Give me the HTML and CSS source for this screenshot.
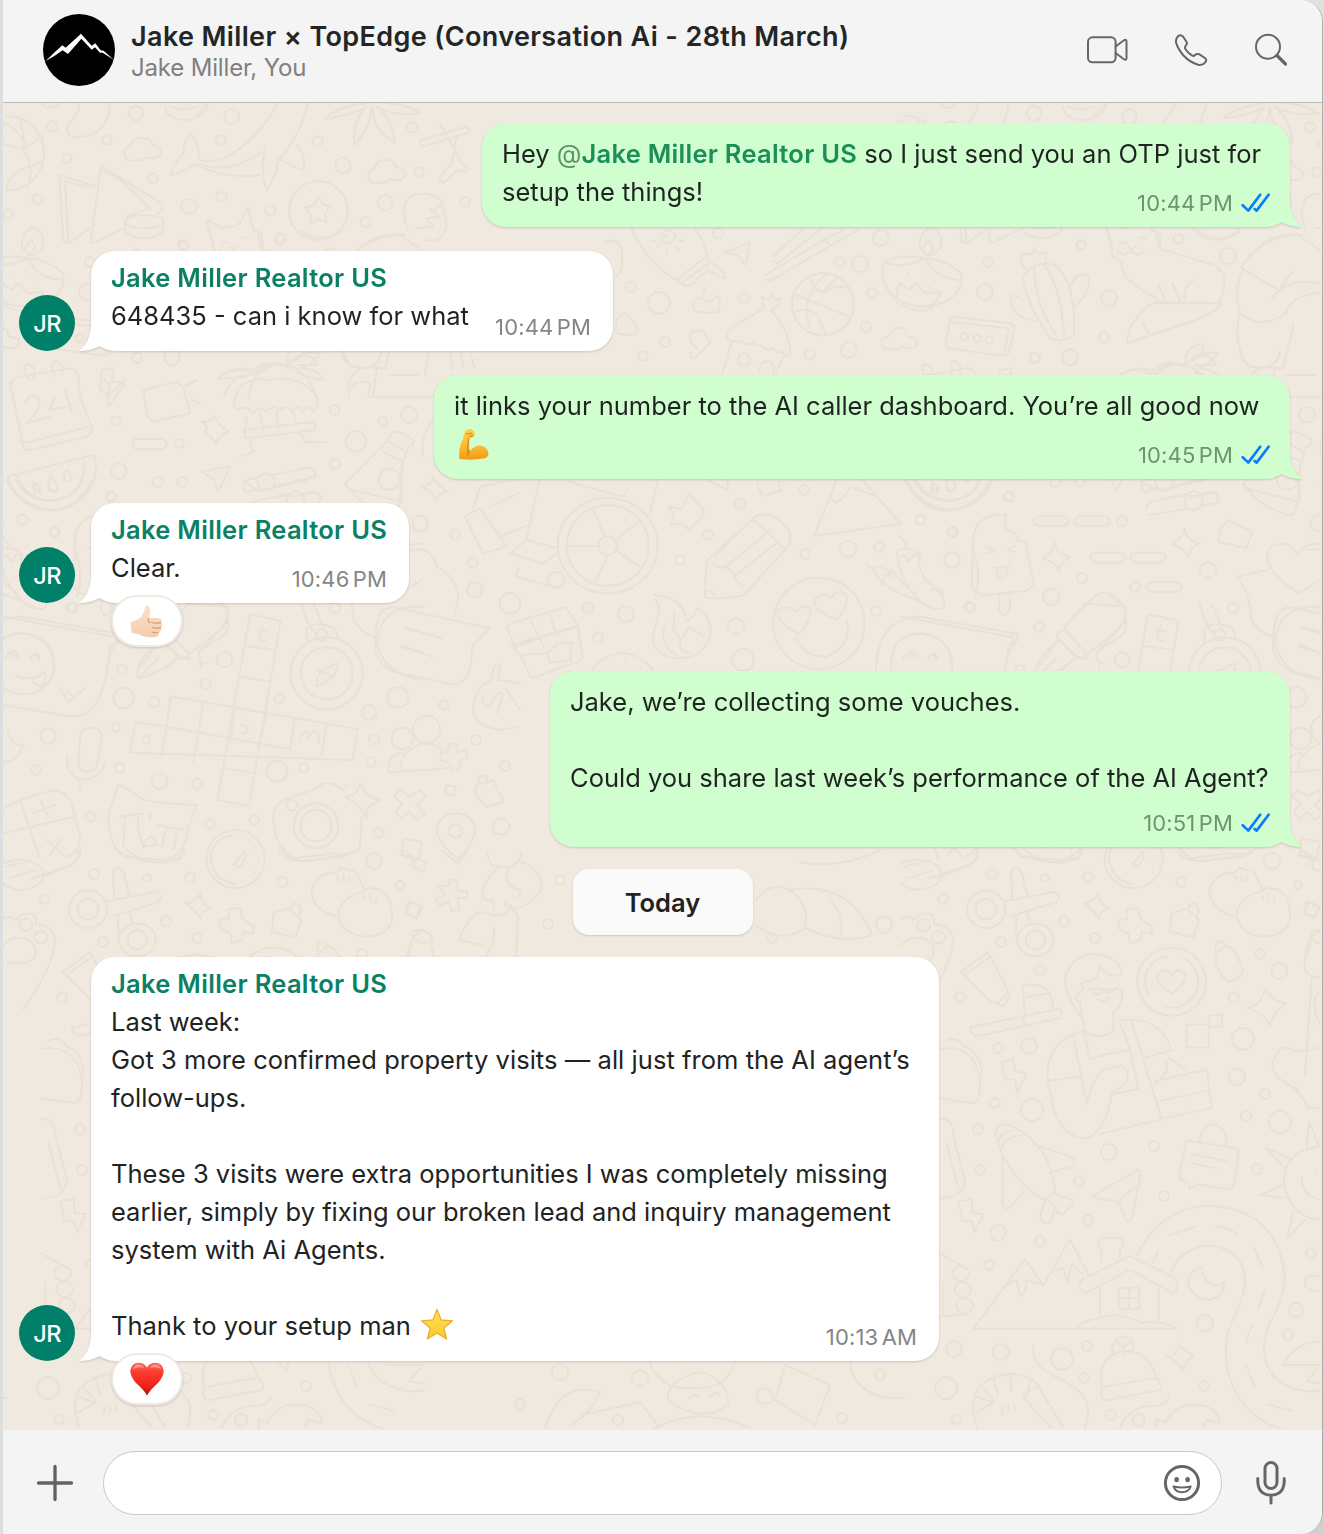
FILE: index.html
```html
<!DOCTYPE html>
<html lang="en">
<head>
<meta charset="utf-8">
<title>Jake Miller × TopEdge</title>
<link rel="stylesheet" href="styles.css">
</head>
<body>
<svg class="defs" width="0" height="0" aria-hidden="true">
  <defs>
    <linearGradient id="skin" x1="0" y1="0" x2="0" y2="1"><stop offset="0" stop-color="#ffd04a"/><stop offset=".6" stop-color="#fdb92e"/><stop offset="1" stop-color="#f09a18"/></linearGradient>
    <linearGradient id="pale" x1="0" y1="0" x2="0" y2="1"><stop offset="0" stop-color="#fbe2cc"/><stop offset="1" stop-color="#f3cdb0"/></linearGradient>
    <linearGradient id="red" x1="0" y1="0" x2="0" y2="1"><stop offset="0" stop-color="#ff6a5e"/><stop offset=".3" stop-color="#fb3b30"/><stop offset=".75" stop-color="#ee2018"/><stop offset="1" stop-color="#a80d0a"/></linearGradient>
    <linearGradient id="gold" x1="0" y1="0" x2="0" y2="1"><stop offset="0" stop-color="#ffe45c"/><stop offset="1" stop-color="#fdc62c"/></linearGradient>
    <symbol id="checks" viewBox="0 0 30 20"><path d="M1.7 12.2L7.3 17.6L19.2 1.8M13.6 16L15.6 17.6L27.6 1.8"/></symbol>
    <symbol id="tail" viewBox="0 0 24 26"><path d="M0 0H12Q13 17 24 25Q12 25 3.5 20L0 22Z"/></symbol>
  </defs>
</svg>
<div class="window">
  <header class="header">
    <svg class="group-photo" viewBox="129 42 216 216"><circle cx="237" cy="150" r="108" fill="#000"/><path d="M137 183L164 157L187 136L197 143L243 101L275 137L286 130L302 151L311 152L341 179L308 158L300 158L285 142L275 149L244 116L204 162L188 151L163 168Z" fill="#fff"/></svg>
    <div class="heading">
      <h1 class="title"><span>Jake Miller × TopEdge (Conversation Ai - 28th March)</span></h1>
      <p class="subtitle"><span>Jake Miller, You</span></p>
    </div>
    <nav class="actions">
      <svg class="icon" width="42" height="34" viewBox="0 0 42 34"><rect x="2" y="4.3" width="27.6" height="25" rx="4.5"/><path d="M29.6 13.5L38 7.2Q40.5 6 40.5 8.5V25Q40.5 27.500 38 26.300L29.600 20"/></svg>
      <svg class="icon" width="34" height="34" viewBox="0 0 34 34"><path d="M4 3.300Q6.500 1 9 3.500L12.600 9Q13.500 11 11.500 13.200Q10.500 14.600 11.500 16.200Q14.500 20.500 18.200 22.600Q19.800 23.400 21 22Q23 20.300 25 21.200L31 25Q33.200 27 31.300 29.300Q28.500 32.600 24.200 31.700Q16 29.500 9.500 22.500Q3.500 15.500 2 9.300Q1.600 5.600 4 3.300Z"/></svg>
      <svg class="icon" width="34" height="34" viewBox="0 0 34 34"><circle cx="14" cy="13.700" r="12"/><path class="heavy" d="M23 22.500L31.500 31"/></svg>
    </nav>
  </header>

  <main class="chat">
    <svg class="wallpaper" viewBox="3 103 1318 1327" aria-hidden="true">
      <g id="doodles">
        <g transform="translate(0 100) scale(.33333)">
          <path d="M20 48a112 112 0 1 1 0 224M0 60Q60 90 75 130L66 148L130 110M75 130L60 55M66 148Q110 200 80 262M66 148L8 130M20 270Q20 220 88 200L132 180"/>
          <path d="M238 8Q240 40 205 75Q190 112 240 112Q330 100 330 8M123 8Q150 40 178 8M495 20Q500 60 560 60Q620 50 625 8M510 20Q545 35 590 20M590 45L625 8"/>
          <path id="cloud" d="M380 180Q360 150 390 140Q400 110 430 115Q455 115 455 135Q490 140 480 165Q470 180 440 172Q420 185 400 182Z"/>
          <use href="#cloud" x="732" y="66"/>
          <path d="M570 98Q600 130 597 175Q600 190 660 178Q760 140 835 8M570 98Q550 130 550 160Q520 190 512 225Q550 220 585 193Q680 240 780 225M597 190Q680 225 780 160M795 140Q780 220 800 270Q825 240 835 180Q900 110 925 8M890 135Q920 170 910 212Q880 200 845 180"/>
          <path d="M270 385L205 430L190 425L178 225L285 258M205 430L195 243L270 262M303 198L485 310Q495 330 470 342M303 198L272 425Q278 433 300 420L370 385M303 210Q360 230 395 270L450 325L380 350M376 365V395Q430 435 490 395V365"/><ellipse cx="433" cy="365" rx="57" ry="20"/>
          <circle cx="955" cy="332" r="88"/><path d="M955 290L970 315L992 318L975 340L980 368L955 358L930 370L932 342L915 322L942 316Z"/>
          <path d="M1110 8Q1010 20 975 55Q1050 50 1100 20Q1060 60 1062 135Q1110 90 1115 20Q1120 90 1183 128Q1180 60 1130 20Q1180 50 1262 40Q1220 10 1140 8"/>
          <path d="M1262 120L1400 80Q1415 90 1400 100L1270 140Q1255 135 1262 120M1320 70L1385 190L1400 200V215L1370 212L1330 250L1318 235L1355 190L1370 105M1345 110L1365 150"/>
          <path d="M640 450L620 360L670 385L715 375L745 322L760 390L785 400L788 450M665 430q10-8 20 0M725 415q10-8 20 0M690 440l10 10l15-12"/>
          <path d="M1225 395Q1190 310 1240 285Q1290 270 1330 305Q1320 330 1290 330L1320 350L1280 355L1300 380L1250 385M1330 325L1340 375Q1330 430 1280 420M1080 445Q1130 395 1215 405"/>
          <circle cx="408" cy="40" r="22"/><circle cx="157" cy="79" r="16"/><circle cx="320" cy="121" r="14"/><circle cx="200" cy="175" r="14"/><circle cx="458" cy="235" r="15"/><circle cx="112" cy="297" r="15"/><circle cx="25" cy="343" r="14"/><circle cx="695" cy="50" r="22"/><circle cx="663" cy="121" r="15"/><circle cx="953" cy="123" r="15"/><circle cx="1029" cy="196" r="23"/><circle cx="567" cy="319" r="23"/><circle cx="665" cy="290" r="15"/><circle cx="811" cy="332" r="15"/><circle cx="1156" cy="308" r="23"/><circle cx="1096" cy="365" r="15"/><circle cx="842" cy="415" r="14"/><circle cx="1257" cy="215" r="14"/><circle cx="1236" cy="82" r="15"/><circle cx="1395" cy="305" r="14"/><circle cx="551" cy="436" r="13"/><circle cx="411" cy="773" r="14"/><circle cx="516" cy="773" r="23"/>
          <path d="M30 865Q30 835 60 830L210 805Q240 810 235 850L245 900M88 840Q60 800 85 793Q110 800 100 835M165 830Q145 785 170 783Q195 790 185 825M305 810L340 805L335 845L375 850L325 920L322 880L300 870ZM655 835Q700 790 780 815Q720 840 655 835M770 820Q800 780 860 795Q900 750 960 760Q930 800 900 805Q960 810 970 840Q920 835 890 815M745 900Q750 820 820 795Q910 780 950 890"/>
          <path d="M1025 755Q1030 800 1090 805Q1140 800 1145 755M1130 800L1120 890M1285 755L1275 830M1350 760l10 50M1380 755l12 55M1410 755l14 50M1040 870Q1050 820 1080 810"/>
        </g>
        <g transform="translate(600 220) scale(.46168 .33333)">
          <path d="M68 25Q100 130 180 195Q205 200 208 180L235 150Q235 80 205 25M165 180L230 110M175 190L240 125L270 160V178L240 155M133 40Q150 20 165 45Q160 75 140 70Q125 55 145 45M125 80l4-8M145 100v-15M170 90l-6-10M110 65l10-3M168 60l12 4"/>
          <path d="M268 98L325 68L315 135L298 105ZM375 110L440 25M375 125L385 130L480 25M358 165L490 55L530 28M358 178L370 182L560 28M485 60l15 18"/>
          <path d="M228 205Q210 235 235 245Q250 240 255 225Q265 255 255 275Q230 285 205 272Q195 240 215 235"/>
          <path d="M275 355Q275 325 300 310L355 265L350 230L365 240L372 222L378 240L390 235L388 255L370 270Q415 340 412 405Q400 415 395 395Q385 405 375 385Q360 395 350 375Q340 380 330 368Q315 380 305 362Q290 370 275 355M285 365L265 460M397 410L382 460M345 455Q345 420 365 425Q380 430 375 460"/><ellipse cx="312" cy="418" rx="13" ry="19"/>
          <ellipse cx="483" cy="253" rx="67" ry="93"/><path d="M425 225L540 290M455 180Q470 220 490 215Q510 190 540 205M490 162Q430 230 455 325M425 275Q450 260 470 285Q480 320 490 340M515 175Q480 210 490 215"/>
          <path d="M713 22Q685 50 695 85Q705 110 720 105Q745 85 738 50Q730 25 713 22M713 60Q690 90 708 103Q730 90 713 60M615 125Q600 210 660 250Q700 270 750 245Q790 210 782 160Q750 120 710 115Q650 100 615 125Q650 150 705 115Q730 180 782 180M645 250Q640 210 650 190L670 210L685 190L705 220L738 215Q730 250 715 255M655 255Q690 285 722 262M668 160v4M700 155v4M725 180v4"/>
          <path d="M760 295Q770 285 780 292L890 310Q900 320 895 340L885 400Q875 410 860 405L755 385Q745 375 750 355ZM755 305L885 325Q880 360 875 400"/><ellipse cx="789" cy="350" rx="8" ry="11"/><ellipse cx="817" cy="355" rx="8" ry="11"/><ellipse cx="843" cy="360" rx="8" ry="11"/>
          <path d="M615 385Q600 355 625 350Q640 310 660 330L665 350Q695 355 685 380Q670 390 660 380Q640 395 615 385M210 385Q185 360 200 335Q225 320 230 350L240 365L205 415Q190 415 200 395"/>
          <path d="M975 355Q920 240 915 170Q940 120 985 135Q1030 180 1027 345Q1005 370 975 355M940 140Q940 250 990 350M962 135Q1000 200 1005 350M920 145Q905 120 915 100L935 105L940 85L950 102L968 98L965 130M915 240Q890 215 890 240Q890 290 945 305M1018 200Q1030 155 1055 165Q1070 200 1030 260"/>
          <path d="M1098 25Q1110 70 1110 110L1130 125Q1125 180 1200 230L1210 245L1340 250Q1370 170 1330 135L1210 85L1205 40M1120 90L1135 105L1150 95L1165 105L1180 95M1210 195L1225 245M1240 190L1258 248M1285 182Q1260 200 1268 240M1142 370Q1140 310 1195 250L1345 250Q1340 275 1290 300L1142 370M1175 310Q1190 350 1200 340M1295 30Q1340 75 1385 35"/>
          <path d="M1390 140Q1430 50 1510 45L1560 90M1390 145L1470 210L1500 155M1390 155Q1370 230 1390 285Q1440 330 1485 280Q1500 220 1560 220M1385 280Q1370 370 1405 440L1480 445L1502 315M1455 235Q1490 170 1560 190M1270 445Q1260 380 1305 372Q1310 400 1285 420Q1320 390 1335 435L1290 435M1130 460Q1160 440 1190 460Q1220 410 1265 440M1490 465h60M10 65Q50 50 48 110Q50 150 35 170M35 340Q30 290 55 280L75 310Q95 340 60 345Z"/>
        </g>
        <g transform="translate(500 470) scale(.52549 .33333)">
          <ellipse cx="205" cy="227" rx="95" ry="143"/><ellipse cx="205" cy="227" rx="78" ry="121"/><ellipse cx="205" cy="227" rx="18" ry="28"/><path d="M200 199L175 115M220 210L263 155M222 242L265 290M204 256L182 335M187 229H130M285 135L300 30M75 30L50 210L110 235M50 210L20 250L80 280L110 250M0 200L55 165M35 295L30 320L105 350M130 35L235 80L242 60"/><ellipse cx="107" cy="330" rx="16" ry="24"/>
          <path d="M360 72L385 115Q395 140 358 178L345 160L325 165L330 140L322 110L345 118ZM390 383Q390 310 395 270L490 135Q510 125 535 155Q560 190 550 225L465 375Q430 390 390 383M405 280Q420 300 430 290L445 310Q450 340 462 350M410 260L480 145L545 240M430 290L515 180M445 320L530 215M390 360Q405 360 410 383"/>
          <path d="M598 197L640 30M598 197L763 162L690 30M632 60Q625 90 640 97Q660 80 665 50L715 78M490 35Q495 80 505 78L535 60L530 35M395 30L433 62V30"/>
          <path d="M770 30Q800 120 850 122Q910 115 932 30M787 30Q810 92 850 92Q900 90 915 30M822 35Q815 60 835 60M850 35Q845 70 865 62"/>
          <path d="M965 135Q900 125 900 220L898 350Q905 375 930 375L1000 362Q1020 350 1013 320L1000 215L985 212L980 190L965 180Q955 150 965 135M950 370V420Q960 450 970 420V365M925 232L942 242L928 250M980 228L965 238L980 245M938 290Q955 300 970 285M945 295Q945 325 956 325Q967 320 965 292"/>
          <rect x="1015" y="139" width="67" height="30" rx="15"/><rect x="1093" y="139" width="67" height="30" rx="15"/><rect x="1123" y="248" width="67" height="30" rx="15"/><rect x="1200" y="248" width="67" height="30" rx="15"/><rect x="1231" y="336" width="67" height="30" rx="15"/>
          <path id="spark" d="M1056 218Q1060 255 1085 262Q1065 275 1064 302Q1055 275 1032 265Q1052 250 1056 218"/><use href="#spark" x="246" y="-42"/>
          <path d="M1230 115Q1225 90 1300 78M1235 135L1305 118M1335 75L1360 65Q1375 80 1360 100L1335 105M1385 150L1432 185L1420 235L1368 215L1372 175ZM1415 40Q1440 110 1505 137Q1520 120 1520 35M1220 35L1250 62L1340 32"/><ellipse cx="1320" cy="92" rx="17" ry="28"/>
          <path d="M1520 370Q1460 310 1460 260Q1460 220 1490 222Q1510 225 1518 255Q1530 215 1560 222M1520 370L1560 330M1460 300L1402 320Q1430 380 1430 450Q1445 490 1470 500M1565 410Q1480 400 1475 520Q1490 620 1565 630M1530 475L1565 492M1520 530L1565 550"/>
          <path d="M758 198Q780 220 770 235Q800 240 800 260Q790 280 810 330Q850 380 845 410Q830 430 800 395Q720 350 712 300Q700 290 697 280M757 265Q750 240 770 235M757 262L770 255L778 275L790 250L800 262M757 265Q765 340 800 395M712 290Q740 290 745 320L735 310L725 345M745 300Q770 350 790 370M820 360Q850 350 840 385"/>
          <path d="M15 480Q10 465 30 455L125 412L148 465L30 530ZM55 440L85 535M92 425L110 500M20 525L148 470L157 560Q155 575 130 585L60 625L40 560M25 525Q35 570 60 550Q90 560 110 520L140 520M90 550L95 578L135 570V520"/>
          <path d="M293 385Q310 410 295 470Q280 540 320 560Q380 580 400 500Q405 440 375 415Q370 440 355 455Q350 380 293 375M315 460Q300 520 335 555M332 425L330 480L345 510Q335 540 360 550M345 510L360 470L388 500"/>
          <ellipse cx="607" cy="460" rx="87" ry="137"/><path d="M568 492Q520 450 530 420Q545 400 563 425Q575 400 590 415Q595 450 568 492M640 448Q590 420 600 385Q615 365 630 385Q640 355 658 370Q665 410 640 448M563 500Q575 560 620 560Q670 530 660 455"/>
          <path d="M715 600Q720 440 800 440L985 492Q990 505 970 540L965 560L960 600M745 600Q740 490 800 490Q860 500 860 600M777 560Q785 525 793 560M815 570Q823 535 831 570M175 600Q230 500 292 600M240 570v5M268 590v4"/>
          <path d="M1075 475Q1080 450 1140 370Q1170 360 1185 410Q1200 480 1180 500L1135 545L1140 590M1160 375L1185 410M1190 455L1140 540M1075 480L1115 550Q1110 575 1095 560L1060 500Q1060 480 1075 480M1060 515L1020 600M1095 560L1070 600"/>
        </g>
        <g transform="translate(0 380) scale(.33333)">
          <path d="M30 10L70 200Q75 215 100 208L260 170Q280 160 275 140L240 50M60 180Q70 190 90 185L270 140M75 70Q90 35 115 55Q130 80 80 130L150 110M165 50L150 90L220 75M195 30L215 95M430 30L530 5L550 20L570 100L460 125Q445 120 440 90ZM550 20L590 0M575 60L600 70M310 0L330 10L320 50L375 0"/>
          <path d="M605 125Q630 130 645 108Q655 140 688 155Q655 165 648 192Q635 165 612 158Q632 145 605 125M400 180Q400 175 410 177H485Q500 180 500 190Q500 208 485 208H410Q395 205 400 180M672 50Q700 -20 740 -10M710 90Q690 70 720 20Q760 -10 800 0Q900 -20 950 50Q960 80 940 95Q925 70 910 95Q895 70 875 95Q860 70 840 90Q820 70 800 95Q780 75 760 100Q740 75 710 90M740 110L735 160M730 150L945 125V150L735 175ZM750 180L760 215L720 230M900 155L915 185H980M780 100L790 150M830 95L835 145M880 95L890 135"/>
          <path d="M22 290L280 225Q290 240 285 290Q270 360 180 390Q60 390 22 290M50 290Q80 360 160 362Q250 350 255 245M105 310Q95 345 115 340Q130 325 105 310M150 290Q140 330 165 335Q185 315 150 290M200 270Q180 300 205 305Q225 295 200 270M605 275L690 258L655 335L640 295Z"/>
          <path d="M740 300L775 292M820 285L930 262Q950 270 945 290L825 318M775 325L740 338Q720 320 740 300M835 350Q860 335 880 350L940 335Q965 340 958 365"/><circle cx="798" cy="306" r="26"/>
          <path d="M1035 310L1155 190L1175 160Q1190 145 1240 180Q1245 195 1225 200L1205 260V365L1060 330Q1035 325 1035 310M1165 185L1215 215M1150 215Q1190 240 1205 240"/><circle cx="1168" cy="298" r="32"/>
          <path d="M1265 320Q1295 320 1300 290Q1315 325 1345 335Q1315 340 1310 360Q1295 330 1265 320M1395 410L1440 385L1520 500L1450 520ZM1420 385L1440 320L1540 300M1470 380L1555 340M1045 50Q1050 -10 1110 10L1105 50H1300M1270 230Q1260 160 1300 120"/>
          <path d="M1150 690Q1165 680 1180 682L1470 745L1415 800Q1420 900 1365 915L1180 875Q1125 850 1125 790Q1130 700 1150 690M1210 740L1325 775M1205 795L1295 830M1230 510Q1300 500 1310 560Q1370 590 1375 650L1365 700M230 650Q250 600 230 520"/>
          <path d="M10 710L340 770Q360 780 330 800Q320 960 260 1000Q230 1015 190 1005L10 975M180 925L205 965L255 925M200 930L215 945M10 775Q60 750 110 770Q165 800 163 860Q150 940 70 943Q30 940 10 925M15 835Q35 800 50 835M90 840Q105 805 118 835M45 885Q100 910 135 875Q145 910 120 920L100 905"/>
          <path d="M750 703L842 722L748 1277L652 1260ZM735 797L825 810M720 890L810 905M510 948L1073 1047L1058 1140L390 1118L407 1025L500 1040ZM705 990L690 1090M515 948L485 1130M610 965L580 1145M800 1000L775 1100M885 1015L870 1110M980 1030L965 1125M675 1165L765 1180M500 1040L870 1108"/>
          <path d="M770 750L800 755M788 735L778 775Q785 790 797 780M428 1080Q435 1060 450 1070Q450 1095 430 1090M900 1085Q905 1050 925 1055L925 1080Q940 1040 955 1060V1090M735 1015v4M725 1035L745 1040Q745 1065 725 1060"/>
          <circle cx="980" cy="880" r="108"/><circle cx="980" cy="880" r="78"/><path d="M950 918Q945 870 1013 850Q1010 900 950 918M955 870L1000 890M920 790V745Q950 720 1005 745L1015 780M905 670Q920 740 950 760M940 670L970 740"/><circle cx="965" cy="765" r="17"/>
          <path d="M415 895Q400 850 480 780L540 830Q480 880 415 895M420 890L475 835M540 830L570 840L560 810M560 670L685 680Q690 710 660 750L570 820M600 830Q590 850 620 850"/>
          <path d="M260 1045Q300 1035 305 1070L290 1160Q260 1190 235 1160L240 1075Q240 1050 260 1045M200 1130Q200 1190 250 1200Q310 1190 315 1145M240 1200V1225M10 1145Q50 1150 70 1095Q30 1100 25 1050"/>
          <path d="M1420 1000Q1420 920 1475 900Q1480 840 1500 855L1495 900L1560 910M1450 950Q1440 980 1470 980Q1490 930 1510 940L1490 1000M1420 1000Q1430 1040 1500 1050L1555 1040M1520 930L1560 990"/>
          <circle cx="1207" cy="1075" r="32"/><circle cx="1280" cy="1048" r="41"/><path d="M1165 1170Q1165 1120 1210 1120M1200 1175Q1200 1110 1270 1090Q1310 1090 1325 1110M1165 1178L1340 1165M1345 1090L1370 1092L1372 1115L1400 1110L1402 1135L1378 1142L1380 1168L1355 1170L1345 1148L1322 1140V1118L1345 1115Z"/>
          <path d="M355 1215Q370 1215 430 1260L500 1270L590 1275L565 1340Q560 1430 490 1440L370 1430Q325 1400 325 1300ZM360 1310L430 1300M470 1335L550 1350M375 1310L370 1400M415 1310Q410 1360 430 1395M500 1340L485 1400M535 1345L520 1410M450 1300v20M430 1400Q445 1360 465 1375L470 1395Z"/>
          <path d="M60 1260L160 1230Q200 1235 215 1270L240 1370Q240 1420 200 1430M60 1260L120 1435M10 1285L60 1260M100 1300L165 1275M122 1262L145 1315M10 1360L220 1310M140 1380L190 1425M185 1375L150 1425"/>
          <path d="M820 1300Q830 1260 880 1250L950 1225Q980 1190 1030 1230L1040 1215M1085 1310L1080 1400Q1060 1430 1000 1420L880 1435Q820 1410 820 1300"/><circle cx="948" cy="1337" r="67"/><circle cx="948" cy="1337" r="47"/><circle cx="876" cy="1275" r="16"/>
          <path d="M1035 1250Q1075 1250 1080 1208Q1095 1250 1143 1262Q1100 1270 1098 1312Q1080 1275 1035 1250M1200 1230L1230 1250L1260 1230L1277 1250L1250 1275L1277 1300L1250 1320L1228 1295L1205 1318L1187 1295L1208 1272L1182 1250ZM1340 1215L1367 1220L1362 1247L1335 1243ZM1430 1215L1480 1200L1510 1265L1458 1282L1425 1240ZM1440 1210L1435 1190L1460 1188V1205M1375 1437Q1310 1390 1310 1345Q1320 1300 1370 1300Q1425 1305 1425 1355Q1415 1400 1375 1437M1485 1320L1515 1315L1530 1340L1515 1365L1485 1360L1475 1340ZM1210 1375L1265 1385L1258 1435L1205 1425Z"/><circle cx="1367" cy="1353" r="20"/>
          <circle cx="707" cy="1437" r="87"/><path d="M700 1365Q632 1375 633 1440Q645 1505 705 1511M700 1455L735 1415Q745 1425 720 1460ZM765 1400v3M778 1435v3M765 1475v3"/>
          <circle cx="348" cy="124" r="14"/><circle cx="538" cy="190" r="14"/><circle cx="356" cy="273" r="23"/><circle cx="473" cy="306" r="15"/><circle cx="546" cy="306" r="14"/><circle cx="333" cy="349" r="13"/><circle cx="67" cy="419" r="15"/><circle cx="162" cy="456" r="13"/><circle cx="1004" cy="90" r="14"/><circle cx="1227" cy="104" r="24"/><circle cx="1148" cy="124" r="13"/><circle cx="1068" cy="184" r="31"/><circle cx="1006" cy="251" r="15"/><circle cx="1260" cy="430" r="23"/><circle cx="1366" cy="465" r="14"/><circle cx="1418" cy="548" r="15"/><circle cx="1424" cy="629" r="23"/><circle cx="1530" cy="670" r="31"/><circle cx="218" cy="683" r="14"/><circle cx="673" cy="839" r="23"/><circle cx="366" cy="868" r="14"/><circle cx="617" cy="911" r="15"/><circle cx="371" cy="954" r="31"/><circle cx="463" cy="967" r="15"/><circle cx="838" cy="956" r="14"/><circle cx="1194" cy="952" r="31"/><circle cx="1107" cy="998" r="22"/><circle cx="1331" cy="975" r="14"/><circle cx="145" cy="1068" r="23"/><circle cx="348" cy="1042" r="13"/><circle cx="107" cy="1170" r="15"/><circle cx="359" cy="1163" r="15"/><circle cx="479" cy="1204" r="23"/><circle cx="592" cy="1211" r="15"/><circle cx="831" cy="1174" r="31"/><circle cx="911" cy="1163" r="14"/><circle cx="1113" cy="1146" r="14"/><circle cx="1122" cy="1078" r="15"/><circle cx="1428" cy="1079" r="15"/><circle cx="1515" cy="1158" r="15"/><circle cx="272" cy="1310" r="15"/><circle cx="629" cy="1332" r="14"/><circle cx="762" cy="1320" r="14"/><circle cx="1136" cy="1358" r="15"/>
        </g>
        <g transform="translate(0 850) scale(.35714 .33333)">
          <path d="M8 40Q80 10 120 60Q130 110 60 120Q30 118 8 100M15 50L85 32M25 85L95 62M120 80L200 45Q225 30 220 0M355 0Q400 40 450 38Q510 30 520 0M780 0Q800 35 840 33L960 20Q990 15 985 0"/>
          <path d="M1125 0L1160 20L1150 45M1120 15L1165 30M1165 25L1195 40L1185 65L1160 55ZM1235 0L1283 42L1310 0M1225 105L1255 110L1260 88L1280 92L1278 120L1308 125V142L1282 145L1285 180L1265 182L1255 155L1232 168L1220 150L1245 135ZM1150 155L1182 170L1165 205L1138 190Z"/>
          <path d="M1365 10Q1370 55 1400 50Q1450 60 1460 10M1400 50Q1350 90 1350 140Q1360 155 1380 150L1385 180M1460 35Q1520 60 1515 120Q1490 160 1450 175Q1410 180 1415 155M1425 60Q1400 100 1455 120Q1460 140 1435 145M1430 165L1450 200L1445 320M1340 185L1385 195Q1420 200 1430 170M1340 185Q1300 220 1285 270L1350 285M1385 235L1380 280L1360 320M1155 245Q1185 230 1210 260Q1210 280 1180 278Q1155 275 1155 245M1155 280L1145 320M1205 280L1215 320"/>
          <path d="M8 205Q30 195 45 210Q60 185 90 192Q105 200 100 222Q150 225 155 270Q150 350 65 478M10 285Q40 250 80 270Q110 290 95 325Q60 350 20 335"/><circle cx="72" cy="225" r="18"/><circle cx="114" cy="262" r="18"/>
        </g>
        <g transform="translate(930 840) scale(.33333 .38266)">
          <path d="M755 22Q780 60 830 55L960 35M250 22Q330 75 445 50L455 22M0 100L120 65Q145 50 147 22"/>
          <ellipse cx="168" cy="181" rx="57" ry="49"/><ellipse cx="168" cy="181" rx="31" ry="27"/><ellipse cx="316" cy="261" rx="55" ry="43"/><ellipse cx="316" cy="261" rx="29" ry="25"/><path d="M225 160L375 135Q395 145 380 162L240 200M247 150L243 85Q255 60 275 85L292 145M258 200L260 260M293 190L300 218"/>
          <path d="M460 165Q490 165 505 140Q510 170 538 180Q510 180 505 205Q490 180 460 165M590 180L625 178L630 205L665 225V245L635 240L630 262L600 270L595 245L565 230V208L590 208ZM725 190L770 180L808 210L790 255L720 240ZM775 182Q780 160 800 168Q810 180 800 205"/>
          <path d="M910 200Q840 180 838 135Q850 85 915 85L930 72Q950 80 970 80L1000 135M990 135L1010 125L1045 130Q1085 150 1080 215Q1060 255 990 252Q920 240 920 190Q930 150 990 135M915 95l5 12M935 90v18M952 95l-4 12M995 145l5 12M1015 142v18M1035 150l-4 12M1130 160L1165 175L1155 200L1120 190Z"/>
          <path d="M92 345L175 293L240 405L220 435L180 420ZM105 352L180 305M205 425L235 400M120 490L390 440Q400 450 390 465L145 512Q120 510 120 490M285 465L280 400Q270 370 300 380Q360 370 370 440M290 410L360 400M275 465L285 480"/>
          <path d="M460 470Q400 400 405 360Q430 290 510 300Q570 310 575 350Q550 360 530 350L510 330L500 360L455 375L460 390L440 405Q430 420 450 422L465 500Q500 525 550 500V450Q580 440 575 385M475 390H575M500 415Q520 430 540 410M485 398Q500 410 520 395Q545 405 560 385"/>
          <path d="M465 497Q350 520 352 620L370 700Q400 780 470 780Q530 760 545 660L590 635Q600 600 575 590L520 600Q490 620 470 690L430 510M352 630L450 618M460 500L480 572L530 560L600 548L625 650L545 665M570 470H620Q700 480 725 550L645 568M570 480L600 548M605 475L695 730L510 768M720 570L735 580L765 600M675 630L830 600L845 700L690 730M675 640L710 605V580M690 682L830 655"/>
          <ellipse cx="725" cy="370" rx="103" ry="89"/><ellipse cx="725" cy="370" rx="80" ry="68" stroke-dasharray="50 18"/><path d="M725 402Q670 370 685 350Q710 330 725 355Q740 330 765 350Q775 370 725 402M855 300L890 275Q920 290 940 340Q930 365 895 370Q860 350 855 300M858 290Q850 265 875 265L890 280M770 482H836V542H770ZM836 460L876 455V488H836ZM950 440Q1000 430 1005 387Q1030 425 1070 428Q1030 445 1020 485Q995 445 950 440"/>
          <path d="M28 545Q100 540 125 570Q150 600 150 640Q150 690 125 687L28 675M50 525Q80 510 105 540Q160 560 155 620M215 580L250 573L255 605L290 610L262 660L255 625L225 625ZM28 730Q70 720 72 780L105 890Q100 920 70 930L28 938M50 795L85 910M85 945L125 938L128 975L160 978L135 1025L125 995L98 995Z"/>
          <path d="M195 770Q200 735 240 745Q350 790 370 890L375 920L345 940Q280 920 215 820ZM205 790Q210 765 245 760M215 805Q220 780 275 770M310 795L430 830Q440 850 420 855L360 868M217 830V950Q225 970 240 960L280 920M345 940L330 985Q345 1010 365 995L375 960M375 925L425 940Q435 955 415 960L400 978L380 975M355 940L395 980"/>
          <path d="M488 930L625 862Q635 865 630 880L605 990Q595 1005 588 990L562 945L500 938ZM560 950L615 905M770 785L915 805Q930 810 925 825L910 905Q900 915 880 910L805 900L780 912L775 895Q745 890 748 870ZM785 822L890 838M785 845L858 858M810 790Q810 745 850 742Q890 750 890 800"/>
          <path d="M1176 800Q1060 810 1062 895Q1080 990 1176 992M1130 805L1137 735L1165 795M1088 835L1008 805L1065 858M1062 900L990 928L1062 935M1090 970L1073 1040L1125 992M1115 880Q1115 930 1165 938M1160 872v3"/>
          <path d="M130 1277L285 1095L340 1165L420 1043L475 1135M130 1277H740Q700 1255 630 1260Q560 1230 510 1250Q460 1255 440 1275M235 1160L260 1150L270 1190Q285 1190 290 1150L330 1160M375 1125L400 1120L412 1155L425 1110L460 1135"/>
          <path d="M455 1150L600 1087L735 1145Q750 1170 730 1185L600 1123L470 1183Q435 1175 455 1150M510 1170V1250M686 1170V1255M567 1170H628V1225H567ZM597 1170V1225M567 1197H628M515 1105V1072Q495 1060 510 1040H570Q590 1050 570 1070V1092"/>
          <path d="M620 1085Q700 950 850 957Q1050 970 1065 1150Q1060 1200 1020 1260Q980 1340 1030 1400Q1090 1450 1176 1438M720 1135Q750 1060 850 1060Q950 1080 945 1160Q940 1200 900 1270Q870 1350 910 1430Q950 1510 1050 1538M720 1032L795 1010M855 1010Q890 1010 922 1030M970 1065L1000 1120M1005 1175L985 1225M968 1270Q950 1290 950 1315M950 1375L975 1430M1015 1475L1085 1492M668 1105L685 1075"/>
          <path d="M815 1115Q770 1130 775 1165Q800 1205 840 1202Q880 1195 885 1155Q860 1170 840 1160Q815 1145 815 1115M710 1350Q740 1350 748 1318Q765 1340 792 1345Q765 1360 762 1385Q740 1360 710 1350M28 1080L110 1120M28 1245L110 1240M40 1155V1240"/><ellipse cx="92" cy="1133" rx="25" ry="19"/><ellipse cx="98" cy="1175" rx="25" ry="20"/><ellipse cx="104" cy="1217" rx="25" ry="19"/>
          <path d="M515 1425Q500 1350 580 1335Q660 1335 680 1410M515 1430L680 1405Q700 1425 690 1437L525 1465Q510 1460 515 1430M555 1345L545 1325L560 1305L580 1298L605 1305L612 1325L600 1345M575 1325L560 1310M580 1325V1350M582 1325L600 1312"/>
          <path d="M130 1500Q120 1430 190 1405Q260 1380 320 1420L375 1500L400 1535M140 1535L130 1500L190 1470L140 1455M190 1465L150 1425M205 1450L190 1405M245 1440L240 1398M290 1450L300 1415M280 1455Q300 1430 330 1430M280 1455L360 1535M215 1500l5-18M235 1495v-18M255 1492l-3-14M310 1320Q300 1370 370 1400Q480 1440 475 1500L465 1535M680 1535V1515L705 1520M705 1525Q740 1460 830 1480Q870 1495 868 1525Q850 1520 830 1515Q820 1530 820 1535M570 1535Q600 1480 660 1480Q710 1480 718 1452M1060 1370Q1100 1310 1176 1310M1060 1372H1176M1165 1380L1130 1415L1176 1420"/>
          <path d="M1176 700H1135L1100 650Q1020 620 1028 580Q1050 530 1080 545Q1110 560 1176 540M1040 620Q1090 640 1130 690M1176 390Q1130 420 1176 490M1145 360L1125 615M1176 235Q1120 250 1125 340Q1140 360 1176 360M1176 1140Q1120 1130 1125 1165Q1140 1180 1176 1180"/>
        </g>
        <g>
          <circle cx="992" cy="874" r="5"/><circle cx="1045" cy="878" r="4"/><circle cx="1088" cy="877" r="5"/><circle cx="1181" cy="882" r="5"/><circle cx="1272" cy="861" r="8"/><circle cx="1298" cy="885" r="4"/><circle cx="943" cy="899" r="5"/><circle cx="1064" cy="921" r="5"/><circle cx="1001" cy="942" r="5"/><circle cx="1095" cy="938" r="5"/><circle cx="1040" cy="970" r="5"/><circle cx="960" cy="997" r="5"/><circle cx="1260" cy="954" r="5"/><circle cx="1279" cy="971" r="8"/><circle cx="1234" cy="997" r="5"/><circle cx="1243" cy="1039" r="11"/><circle cx="998" cy="1048" r="5"/><circle cx="1029" cy="1046" r="8"/><circle cx="1237" cy="1077" r="8"/><circle cx="1265" cy="1094" r="5"/><circle cx="995" cy="1103" r="5"/><circle cx="1032" cy="1110" r="11"/><circle cx="1246" cy="1116" r="5"/><circle cx="1280" cy="1122" r="11"/><circle cx="978" cy="1129" r="5"/><circle cx="1109" cy="1152" r="8"/><circle cx="1154" cy="1146" r="5"/><circle cx="980" cy="1170" r="5"/><circle cx="1079" cy="1181" r="5"/><circle cx="1257" cy="1169" r="5"/><circle cx="1164" cy="1196" r="5"/><circle cx="1088" cy="1220" r="5"/><circle cx="998" cy="1233" r="8"/><circle cx="1040" cy="1241" r="5"/><circle cx="989" cy="1265" r="5"/><circle cx="1311" cy="1253" r="5"/><circle cx="1205" cy="1323" r="8"/><circle cx="1296" cy="1310" r="7"/><circle cx="1288" cy="1335" r="5"/><circle cx="954" cy="1349" r="8"/><circle cx="1001" cy="1352" r="8"/><circle cx="1062" cy="1359" r="11"/><circle cx="1087" cy="1346" r="5"/><circle cx="1084" cy="1378" r="5"/><circle cx="1204" cy="1386" r="5"/><circle cx="946" cy="1388" r="11"/><circle cx="957" cy="1419" r="5"/><circle cx="1111" cy="1415" r="5"/><circle cx="1139" cy="1420" r="6"/>
          <circle cx="740" cy="504" r="5"/><circle cx="708" cy="535" r="5"/><circle cx="680" cy="560" r="5"/><circle cx="804" cy="490" r="5"/><circle cx="953" cy="532" r="5"/><circle cx="805" cy="554" r="5"/><circle cx="848" cy="549" r="8"/><circle cx="879" cy="547" r="5"/><circle cx="1009" cy="497" r="5"/><circle cx="952" cy="560" r="8"/><circle cx="588" cy="608" r="5"/><circle cx="626" cy="614" r="8"/><circle cx="736" cy="626" r="8"/><circle cx="598" cy="637" r="5"/><circle cx="743" cy="660" r="11"/><circle cx="876" cy="611" r="5"/><circle cx="969" cy="607" r="5"/><circle cx="1051" cy="597" r="8"/><circle cx="1082" cy="578" r="5"/><circle cx="1039" cy="627" r="5"/><circle cx="1135" cy="587" r="5"/><circle cx="1208" cy="570" r="8"/><circle cx="1233" cy="608" r="5"/><circle cx="1122" cy="521" r="5"/>
          <circle cx="718" cy="233" r="5"/><circle cx="881" cy="238" r="8"/><circle cx="840" cy="262" r="5"/><circle cx="860" cy="264" r="8"/><circle cx="988" cy="262" r="5"/><circle cx="631" cy="287" r="5"/><circle cx="659" cy="303" r="11"/><circle cx="744" cy="298" r="5"/><circle cx="872" cy="293" r="5"/><circle cx="985" cy="292" r="8"/><circle cx="1081" cy="245" r="5"/><circle cx="1109" cy="298" r="8"/><circle cx="1178" cy="239" r="5"/><circle cx="1228" cy="256" r="8"/><circle cx="866" cy="327" r="5"/><circle cx="665" cy="342" r="5"/><circle cx="643" cy="356" r="5"/><circle cx="849" cy="350" r="8"/><circle cx="810" cy="355" r="5"/><circle cx="1035" cy="358" r="5"/><circle cx="1070" cy="357" r="8"/><circle cx="1104" cy="337" r="5"/>
          <circle cx="548" cy="924" r="5"/><circle cx="560" cy="880" r="5"/><circle cx="772" cy="938" r="5"/><circle cx="884" cy="925" r="8"/><circle cx="560" cy="1372" r="8"/><circle cx="520" cy="1404" r="5"/><circle cx="640" cy="1378" r="8"/><circle cx="765" cy="1396" r="8"/><circle cx="842" cy="1418" r="5"/><circle cx="618" cy="1420" r="5"/><circle cx="880" cy="1375" r="5"/>
          <path d="M756 900Q770 880 790 890Q850 880 872 935Q840 945 805 928Q780 945 756 925M790 890Q810 905 805 928M830 900Q845 915 840 940M800 862Q840 870 880 850M545 1428Q560 1380 600 1392Q590 1415 570 1425M650 1362Q660 1390 690 1388Q725 1392 735 1362M668 1400Q665 1380 700 1372Q730 1380 728 1405Q700 1425 668 1400M690 1398q6-6 10 0M710 1396q6-6 10 0M655 1428Q700 1405 750 1428M785 1365L830 1385L815 1425L775 1400ZM850 1362Q855 1400 905 1398M582 1415L640 1402L660 1428"/>
        </g>
      </g>
      <use href="#doodles" x="898"/>
      <use href="#doodles" x="-898"/>
    </svg>

    <section class="messages">
      <article class="row row-out">
        <div class="bubble bubble-out w-otp">
          <p class="text">Hey <span class="at">@</span><b class="mention">Jake Miller Realtor US</b> so I just send you an OTP just for<br>setup the things!</p>
          <footer class="meta"><time>10:44 PM</time><svg class="checks"><use href="#checks"/></svg></footer>
          <svg class="tail"><use href="#tail"/></svg>
        </div>
      </article>
      <article class="row">
        <span class="avatar">JR</span>
        <div class="bubble bubble-in w-code">
          <h2 class="sender">Jake Miller Realtor US</h2>
          <p class="text">648435 - can i know for what</p>
          <footer class="meta"><time>10:44 PM</time></footer>
          <svg class="tail"><use href="#tail"/></svg>
        </div>
      </article>
      <article class="row row-out">
        <div class="bubble bubble-out w-links">
          <p class="text">it links your number to the AI caller dashboard. You’re all good now<br><svg class="emoji muscle" width="32" height="34" viewBox="0 0 32 34"><path d="M1.500 31Q0 20 5 11Q6 2 11 1Q16 1 17 6Q17 9 13 10L11 9Q11 19 12 23Q20 14 28 20Q33 26 28 30Q15 33 1.500 31Z" fill="url(#skin)"/><path d="M11 10Q9 19 10 25M12 23Q9 25 10 28M8 6L14 5M11 9L15 7" fill="none" stroke="#d6811c" stroke-width="1.200"/></svg></p>
          <footer class="meta"><time>10:45 PM</time><svg class="checks"><use href="#checks"/></svg></footer>
          <svg class="tail"><use href="#tail"/></svg>
        </div>
      </article>
      <article class="row reacted">
        <span class="avatar">JR</span>
        <div class="bubble bubble-in w-clear">
          <h2 class="sender">Jake Miller Realtor US</h2>
          <p class="text">Clear.</p>
          <footer class="meta"><time>10:46 PM</time></footer>
          <svg class="tail"><use href="#tail"/></svg>
          <span class="reaction"><svg width="34" height="34" viewBox="0 0 34 34"><path d="M1 18Q6 16 9 15Q15 9 15 2Q18 0 20 4Q21 9 19 14H29Q33 15 31 18.500Q33.500 21 31 23.500Q32 27 29 28Q29.500 32.500 25 33Q15 34 8 30L2 29Q0 24 1 18Z" fill="url(#pale)"/><path d="M31 18.500Q25 20 21 18M31 23.500Q25 25 22 23M29 28Q25 29.500 22 28M19 14Q17 17 20 19" fill="none" stroke="#d9a27e" stroke-width="1.300"/></svg></span>
        </div>
      </article>
      <article class="row row-out">
        <div class="bubble bubble-out bubble-tall w-vouch">
          <p class="text">Jake, we’re collecting some vouches.<br><br>Could you share last week’s performance of the AI Agent?</p>
          <footer class="meta"><time>10:51 PM</time><svg class="checks"><use href="#checks"/></svg></footer>
          <svg class="tail"><use href="#tail"/></svg>
        </div>
      </article>
      <div class="day"><span>Today</span></div>
      <article class="row">
        <span class="avatar">JR</span>
        <div class="bubble bubble-in w-week">
          <h2 class="sender">Jake Miller Realtor US</h2>
          <p class="text">Last week:<br><span class="loose">Got 3 more confirmed property visits — all just from the AI agent’s</span><br>follow-ups.<br><br>These 3 visits were extra opportunities I was completely missing<br>earlier, simply by fixing our broken lead and inquiry management<br>system with Ai Agents.<br><br>Thank to your setup man <svg class="emoji star" width="34" height="34" viewBox="0 0 34 34"><path d="M17 1.500L21.200 12L32.500 12.800L23.800 20L26.600 31L17 25L7.400 31L10.200 20L1.500 12.800L12.800 12Z" fill="url(#gold)" stroke="#f0ad2c" stroke-width="1.300" stroke-linejoin="round"/></svg></p>
          <footer class="meta"><time>10:13 AM</time></footer>
          <svg class="tail"><use href="#tail"/></svg>
          <span class="reaction"><svg width="34" height="34" viewBox="0 0 34 34"><path d="M17 33.500Q14 28 6 21Q0 14 .300 8.500Q1.500 1 8.500 .700Q14.500 .800 17 5.500Q19.500 .800 25.500 .700Q32.500 1 33.700 8.500Q34 14 28 21Q20 28 17 33.500Z" fill="url(#red)"/><path d="M3 7Q5 2 9 2.500Q13 3 14 6Q9 4 3 7M20 6Q22 2.500 26 2.500Q30 3 31 7Q25 4 20 6Z" fill="#ffb5ae" opacity=".65"/></svg></span>
        </div>
      </article>
    </section>
  </main>

  <footer class="composer">
    <svg class="icon plus" width="38" height="38" viewBox="0 0 38 38"><path d="M19 2.500V35.500M2.500 19H35.500"/></svg>
    <div class="field">
      <svg class="icon smile" width="38" height="38" viewBox="0 0 38 38"><circle cx="19" cy="19" r="16.600"/><ellipse class="solid" cx="13.600" cy="15.600" rx="2.300" ry="2.700"/><ellipse class="solid" cx="24.600" cy="15.600" rx="2.300" ry="2.700"/><path class="mouth" d="M10.500 22.500Q19 24.500 27.700 22.500Q25.500 28.300 19 28.300Q12.500 28.300 10.500 22.500Z"/></svg>
    </div>
    <svg class="icon mic" width="32" height="46" viewBox="0 0 32 46"><rect x="10" y="2.500" width="12" height="26" rx="6"/><path d="M2.800 18.500V22Q3.500 34.800 16 35.200Q28.500 34.800 29.200 22V18.500M16 35.200V43"/></svg>
  </footer>
</div>
</body>
</html>
```
FILE: styles.css
```css
* { box-sizing: border-box; margin: 0; padding: 0; }
body {
  width: 1324px;
  height: 1534px;
  background: linear-gradient(#dfe2e1, #d0d0d0);
  font-family: Inter, "Liberation Sans", sans-serif;
  color: #1f2321;
  overflow: hidden;
}
.defs { position: absolute; }
.window {
  display: flex;
  flex-direction: column;
  width: 1323px;
  height: 1534px;
  border-left: 3px solid #dcdfde;
  border-right: 1px solid #a9acab;
  border-radius: 0 22px 22px 0;
  background: #f4f4f4;
  overflow: hidden;
}

.header {
  display: flex;
  align-items: center;
  height: 103px;
  padding: 0 34px 3px 40px;
  border-bottom: 1px solid #b9bdb9;
  background: #f4f4f4;
}
.group-photo { width: 72px; height: 72px; margin-right: 16px; }
.heading { flex: 1; padding-top: 4px; white-space: nowrap; }
.title { font-size: 27px; font-weight: 600; line-height: 32px; letter-spacing: .37px; color: #242625; }
.subtitle { font-size: 24px; line-height: 30px; letter-spacing: -.17px; color: #808080; }
.actions { display: flex; align-items: center; gap: 46px; }
.icon { flex-shrink: 0; fill: none; stroke: #666; stroke-width: 2; stroke-linecap: round; stroke-linejoin: round; }
.icon .heavy { stroke-width: 3.2; }

.chat { position: relative; height: 1327px; background: #f0e9df; }
.wallpaper { position: absolute; inset: 0; width: 1318px; height: 1327px; fill: none; stroke: #e9e1d6; stroke-width: 2; stroke-linejoin: round; stroke-linecap: round; }
.wallpaper * { vector-effect: non-scaling-stroke; }
.messages { position: relative; display: flex; flex-direction: column; gap: 24px; padding: 20px 32px 0 16px; }
.row { display: flex; align-items: flex-end; gap: 16px; }
.row-out { justify-content: flex-end; }
.reacted { margin-bottom: 44px; }
.avatar {
  display: flex; align-items: center; justify-content: center;
  width: 56px; height: 56px; border-radius: 50%;
  background: #008069; color: #fff; font-size: 23.500px; font-weight: 500; letter-spacing: -.5px;
}
.bubble { position: relative; border-radius: 24px; padding: 8px 20px 16px; filter: drop-shadow(0 1px 1px rgba(60, 50, 40, .2)); }
.bubble-in { background: #fff; }
.bubble-out { padding-top: 12px; background: #d0fecf; }
.bubble-tall { padding-bottom: 50px; }
.w-otp { width: 808px; }
.w-code { width: 522px; }
.w-links { width: 856px; }
.w-clear { width: 318px; }
.w-vouch { width: 740px; }
.w-week { width: 848px; }
.sender, .text { font-size: 25.500px; line-height: 38px; white-space: nowrap; }
.sender { font-weight: 600; letter-spacing: .3px; color: #0b8065; }
.at { color: #5f9267; }
.mention { font-weight: 600; letter-spacing: .28px; color: #1c8e58; }
.loose { letter-spacing: .05px; }
.meta {
  position: absolute; right: 22px; bottom: 10px;
  display: flex; align-items: center; gap: 8px;
  height: 28px; font-size: 22px; letter-spacing: .15px; word-spacing: -3px; color: #858585; white-space: nowrap;
}
.bubble-out .meta { right: 19px; color: #6d9470; }
.checks { width: 30px; height: 20px; fill: none; stroke: #0a7cff; stroke-width: 2.700; stroke-linecap: round; stroke-linejoin: round; }
.tail { position: absolute; right: -12px; bottom: -1px; width: 24px; height: 26px; fill: #d0fecf; }
.bubble-in .tail { right: auto; left: -12px; transform: scaleX(-1); fill: #fff; }
.emoji { vertical-align: -7px; }
.muscle { margin-left: 4px; vertical-align: -9px; }
.star { margin-left: 2px; }
.reaction {
  position: absolute; left: 22px; bottom: -42px;
  display: flex; align-items: center; justify-content: center;
  width: 68px; height: 48px; border-radius: 24px; background: #fff;
  box-shadow: 0 0 0 2px #efe9e2;
}
.day { display: flex; justify-content: center; margin: -2px 0; padding-left: 16px; }
.day span {
  width: 180px; height: 66px; border-radius: 16px; background: #fafafa;
  box-shadow: 0 1px 2px rgba(60, 50, 40, .2);
  font-size: 25.500px; font-weight: 600; line-height: 68px; text-align: center;
}

.composer { display: flex; align-items: center; flex: 1; padding: 2px 0 0 33px; background: #f4f4f4; }
.plus { stroke: #5f6361; stroke-width: 3.300; }
.field {
  display: flex; flex-shrink: 0; align-items: center; justify-content: flex-end;
  width: 1119px; height: 64px; margin: 0 33px 0 29px; padding-right: 20px;
  border: 1px solid #c9c9c9; border-radius: 32px; background: #fff;
}
.smile { stroke-width: 3; }
.smile .solid { fill: #666; stroke: none; }
.smile .mouth { stroke-width: 2; }
.mic { stroke-width: 3; }
```
